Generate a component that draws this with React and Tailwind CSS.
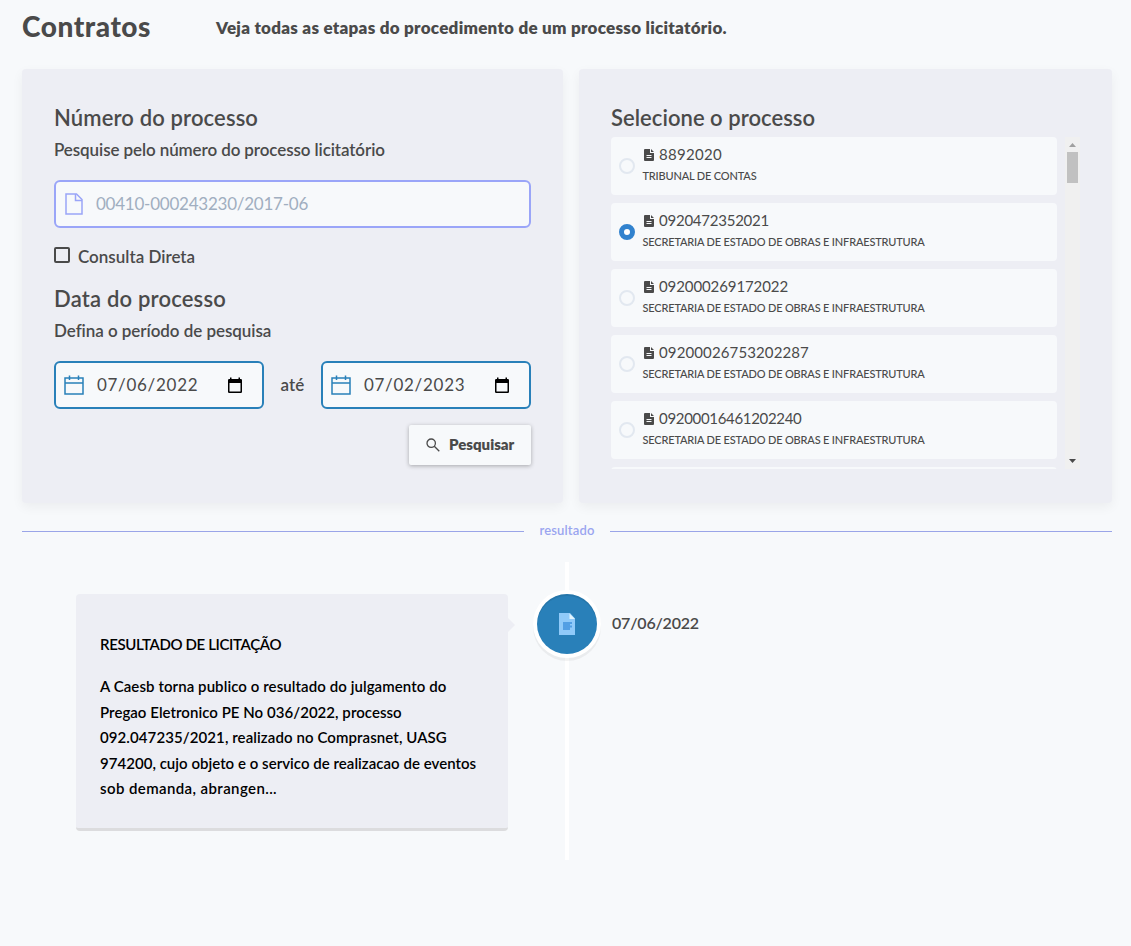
import React from "react";

const INFRA = "SECRETARIA DE ESTADO DE OBRAS E INFRAESTRUTURA";
const processes = [
  { number: "8892020", agency: "TRIBUNAL DE CONTAS", spacing: "tracking-[0.3px]" },
  { number: "0920472352021", agency: INFRA, spacing: "tracking-[-0.24px]", selected: true },
  { number: "092000269172022", agency: INFRA, spacing: "tracking-[-0.1px]" },
  { number: "09200026753202287", agency: INFRA, spacing: "tracking-[0.12px]" },
  { number: "09200016461202240", agency: INFRA, spacing: "tracking-[-0.32px]" },
];

const resultLines = [
  { text: "A Caesb torna publico o resultado do julgamento do", spacing: "tracking-[0.08px]" },
  { text: "Pregao Eletronico PE No 036/2022, processo", spacing: "tracking-[0.04px]" },
  { text: "092.047235/2021, realizado no Comprasnet, UASG", spacing: "tracking-[0.09px]" },
  { text: "974200, cujo objeto e o servico de realizacao de eventos", spacing: "tracking-[0.03px]" },
  { text: "sob demanda, abrangen...", spacing: "tracking-[0.4px]" },
];

function FileOutline() {
  return (
    <svg className="h-[22px] w-[18px] text-[#9aa5f8]" viewBox="0 0 18 22" fill="none" stroke="currentColor" strokeWidth="1.5">
      <path d="M1 1h10.500l5.500 5.500V21H1z" />
      <path d="M10.500 1v6.500H17" />
    </svg>
  );
}

function FileLines() {
  return (
    <svg className="mb-[2px] h-3 w-[10px] shrink-0" viewBox="0 0 10 12">
      <path fill="#4a4a4a" d="M1 0h5v4h4v7a1 1 0 0 1-1 1H1a1 1 0 0 1-1-1V1a1 1 0 0 1 1-1zM7 0l3 3H7z" />
      <path stroke="#f7f9fb" d="M2.500 6.500h5M2.500 8.500h5" />
    </svg>
  );
}

function CalendarOutline() {
  return (
    <svg className="h-5 w-5" viewBox="0 0 20 20" fill="none" stroke="#2980b9" strokeWidth="1.500">
      <path d="M1 3h18v16H1zM1 8h18M5.500 0.500v4.500M14.500 0.500v4.500" />
    </svg>
  );
}

function PickerIcon() {
  return (
    <svg className="h-4 w-[14px]" viewBox="0 0 14 16">
      <path fill="#000" fillRule="evenodd" d="M2 2V0.500h1.500V2h7V0.500H12V2h0.800A1.200 1.200 0 0 1 14 3.200V14.800A1.200 1.200 0 0 1 12.800 16H1.200A1.200 1.200 0 0 1 0 14.800V3.200A1.200 1.200 0 0 1 1.200 2zM1.500 6v8.500h11V6z" />
    </svg>
  );
}

function DateField({ value }) {
  return (
    <div className="flex h-12 w-[210px] items-center rounded-md border-2 border-[#2980b9] bg-[#f7f9fb] pl-2 pr-5 text-[#4a4a4a]">
      <CalendarOutline />
      <span className="ml-[13px] flex-1 text-[17px] tracking-[0.7px]">{value}</span>
      <PickerIcon />
    </div>
  );
}

export default function App() {
  return (
    <div className="min-h-[946px] bg-[#f7f9fb] pl-[22px] pr-[19px] font-['Lato',sans-serif] text-[#4a4a4a]">
      <header className="flex h-[69px] items-start">
        <h1 className="w-[194px] pt-[6px] text-[28px] font-black leading-10 tracking-[0.55px]">Contratos</h1>
        <p className="pt-[13px] text-[17px] font-extrabold leading-[30px] tracking-[0.26px]">Veja todas as etapas do procedimento de um processo licitatório.</p>
      </header>
      <main>
        <div className="flex gap-4">
          <section className="h-[434px] w-[541px] rounded bg-[#edeef4] px-8 pt-8 font-semibold shadow-[0_4px_12px_rgba(0,0,0,0.05)]">
            <h2 className="pt-[1px] text-[22px] leading-8 tracking-[0.13px]">Número do processo</h2>
            <p className="text-[17px] leading-8 tracking-[-0.1px]">Pesquise pelo número do processo licitatório</p>
            <div className="mt-[14px] flex h-12 items-center gap-[13px] rounded-md border-2 border-[#9aa5f8] bg-[#f7f9fb] pl-[9px] font-normal text-[#a0aec0]">
              <FileOutline />
              <span className="text-[17px] tracking-[-0.24px]">00410-000243230/2017-06</span>
            </div>
            <div className="mt-[15px] flex h-6 items-center gap-2 text-[17px]">
              <span className="h-4 w-4 rounded-[2px] border-2 border-[#4a4a4a]" />
              <span className="pt-[3px]">Consulta Direta</span>
            </div>
            <h2 className="mt-4 text-[22px] leading-8 tracking-[0.19px]">Data do processo</h2>
            <p className="text-[17px] leading-8 tracking-[-0.05px]">Defina o período de pesquisa</p>
            <div className="mt-[14px] flex items-center justify-between font-normal">
              <DateField value="07/06/2022" />
              <span className="text-[17px] font-semibold tracking-[0.13px]">até</span>
              <DateField value="07/02/2023" />
            </div>
            <div className="mt-4 flex justify-end">
              <button className="flex h-10 w-[122px] items-center gap-[9px] rounded-[2px] bg-[#f7f9fb] pl-[17px] text-[15px] font-extrabold shadow-[0_1px_4px_rgba(0,0,0,0.3)]">
                <svg className="h-[14px] w-[14px]" viewBox="0 0 14 14" fill="none" stroke="#4a4a4a" strokeWidth="1.300">
                  <circle cx="5.200" cy="5.200" r="4.200" />
                  <path d="M8.300 8.300l5 5" />
                </svg>
                <span className="pb-px">Pesquisar</span>
              </button>
            </div>
          </section>
          <section className="h-[434px] w-[533px] rounded bg-[#edeef4] px-8 pt-8 shadow-[0_4px_12px_rgba(0,0,0,0.05)]">
            <h2 className="h-9 pt-[1px] text-[22px] font-semibold leading-8 tracking-[0.04px]">Selecione o processo</h2>
            <div className="flex h-[332px] justify-between">
              <div className="flex w-[446px] flex-col gap-2 overflow-hidden">
                {processes.map((p) => (
                  <label key={p.number} className="flex h-[58px] shrink-0 items-center rounded bg-[#f7f9fb] pl-2">
                    <span className={p.selected ? "h-4 w-4 rounded-full border-[5px] border-[#3182ce] bg-white" : "h-4 w-4 rounded-full border-2 border-[#e2e8f0]"} />
                    <span className="ml-[7.5px] pb-px">
                      <span className="flex h-[22px] items-center gap-[5px] pl-[1.5px] text-[15px]">
                        <FileLines />
                        <span className={`pb-[2px] ${p.spacing}`}>{p.number}</span>
                      </span>
                      <span className="flex h-5 items-center text-[11px] font-medium tracking-[-0.17px]">{p.agency}</span>
                    </span>
                  </label>
                ))}
                <div className="h-[58px] shrink-0 rounded bg-[#f7f9fb]" />
              </div>
              <div className="flex w-[15px] flex-col items-center bg-[#f0f0f0]">
                <svg className="h-[15px] w-[7px] shrink-0" viewBox="0 0 7 15"><path d="M0 10L3.500 6L7 10z" fill="#a0a0a0" /></svg>
                <span className="h-[31px] w-[11px] bg-[#c1c1c1]" />
                <svg className="mt-auto h-[15px] w-[7px] shrink-0" viewBox="0 0 7 15"><path d="M0 5L3.500 9L7 5z" fill="#4a4a4a" /></svg>
              </div>
            </div>
          </section>
        </div>
        <div className="mt-4 flex h-6 items-center text-[13px] font-semibold text-[#9aa5f0]">
          <span className="h-px flex-1 bg-[#9aa5e8]" />
          <span className="w-[86px] text-center tracking-[0.15px]">resultado</span>
          <span className="h-px flex-1 bg-[#9aa5e8]" />
        </div>
        <div className="relative mt-[19px] flex h-[298px] items-start pt-8">
          <div className="absolute left-[543px] top-0 h-full w-1 bg-white" />
          <article className="relative ml-[54px] h-[237px] w-[432px] rounded border-b-[3px] border-[#dcdcde] bg-[#edeef4] px-6 pt-[38px] text-[15px] font-semibold text-black">
            <div className="absolute -right-[7px] top-6 h-0 w-0 border-y-[7px] border-l-[7px] border-y-transparent border-l-[#edeef4]" />
            <h3 className="leading-[25px] tracking-[-0.37px]">RESULTADO DE LICITAÇÃO</h3>
            <p className="mt-[17px] leading-[25.6px]">
              {resultLines.map((line) => (
                <span key={line.text} className={`block whitespace-nowrap ${line.spacing}`}>{line.text}</span>
              ))}
            </p>
          </article>
          <div className="relative ml-[29px] flex h-[60px] w-[60px] items-center justify-center rounded-full bg-[#2980b9] shadow-[0_0_0_4px_#fff,inset_0_2px_0_rgba(0,0,0,0.08),0_3px_0_4px_rgba(0,0,0,0.05)]">
            <svg className="h-[22px] w-4" viewBox="0 0 16 22">
              <path fill="#90caf9" d="M0 0h11l5 5.500V22H0z" />
              <path fill="#e1f5fe" d="M10.500 0.500v5.500H16z" />
              <path fill="#539fe4" d="M4 9h9v2h-2v1.500h2v2h-2V17H4z" />
            </svg>
          </div>
          <time className="ml-[15px] pt-[19px] text-[16px] font-semibold leading-5 tracking-[-0.2px]">07/06/2022</time>
        </div>
      </main>
    </div>
  );
}
